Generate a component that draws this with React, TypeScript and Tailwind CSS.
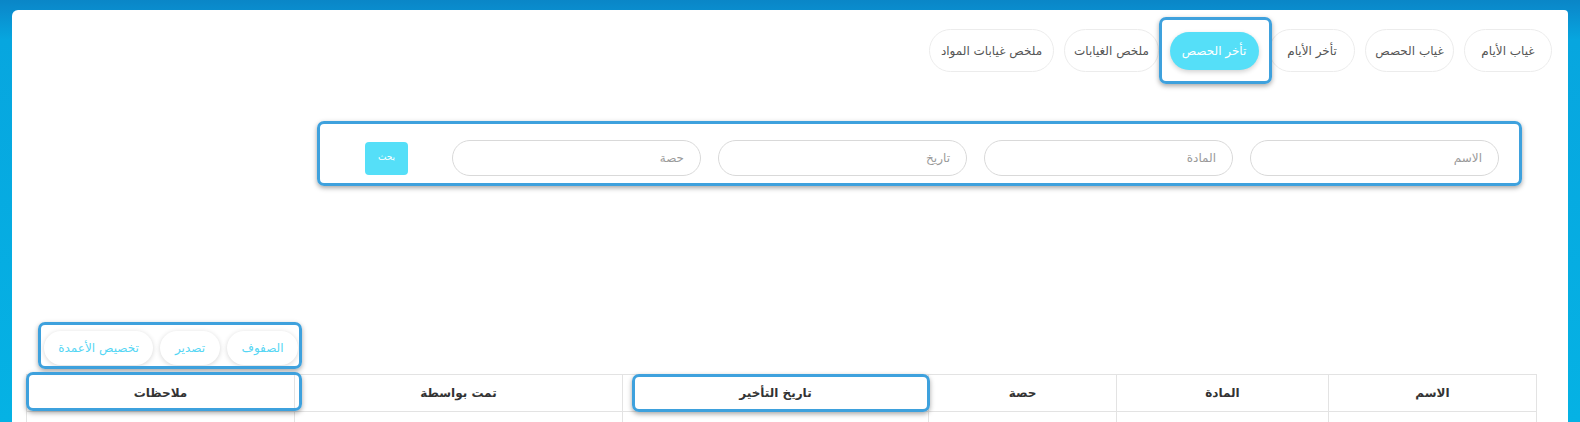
import React from "react";

const tabs = [
  { label: "غياب الأيام", w: "w-[88px]" },
  { label: "غياب الحصص", w: "w-[89px]" },
  { label: "تأخر الأيام", w: "w-[86px]" },
  { label: "تأخر الحصص", w: "w-[90px]", active: true },
  { label: "ملخص الغيابات", w: "w-[95px]" },
  { label: "ملخص غيابات المواد", w: "w-[125px]" },
];

const fields = ["الاسم", "المادة", "تاريخ", "حصة"];

const columns = [
  { label: "الاسم", w: "w-[208px]" },
  { label: "المادة", w: "w-[212px]" },
  { label: "حصة", w: "w-[188px]" },
  { label: "تاريخ التأخير", w: "w-[306px]" },
  { label: "تمت بواسطة", w: "w-[328px]" },
  { label: "ملاحظات", w: "w-[268px]" },
];

// annotation outline drawn over the real content
const mark =
  "pointer-events-none absolute border-[3px] border-[#3ea1dd] rounded-[7px] shadow-[0_2px_5px_rgba(0,0,0,0.35)]";

export default function App() {
  return (
    <div
      className="w-[1580px] h-[422px] overflow-hidden flex flex-col bg-[linear-gradient(180deg,#0a86c7_0px,#0a8ccd_9px,#07a6df_40px,#05b2e4_100%)]"
      style={{ fontFamily: '"DejaVu Sans", "Liberation Sans", sans-serif' }}
    >
      <div className="flex-1 pt-[10px] pl-[12px] pr-[12px] flex">
        <div className="flex-1 bg-white rounded-tl-[6px] rounded-tr-[4px] flex flex-col overflow-hidden">
          {/* tabs */}
          <div dir="rtl" className="flex gap-[10px] mt-[19px] mr-[16px]">
            {tabs.map((t) =>
              t.active ? (
                <div key={t.label} className={`relative h-[43px] ${t.w} flex items-center justify-center`}>
                  <div className="w-[89px] h-[38px] shrink-0 rounded-full bg-[#55dff8] text-white text-[12px] flex items-center justify-center shadow-[0_2px_5px_rgba(0,0,0,0.18)]">
                    {t.label}
                  </div>
                  <div className={`${mark} -left-[10px] -right-[13px] -inset-y-[12px]`} />
                </div>
              ) : (
                <div
                  key={t.label}
                  className={`h-[43px] ${t.w} rounded-full border border-[#ececec] bg-white text-[#555] text-[12px] flex items-center justify-center`}
                >
                  {t.label}
                </div>
              )
            )}
          </div>

          {/* search form */}
          <div className="relative w-[1205px] h-[65px] ml-auto mr-[46px] mt-[49px]">
            <div dir="rtl" className="flex items-center gap-[17px] pr-[23px] pt-[19px]">
              {fields.map((f) => (
                <div
                  key={f}
                  className="w-[249px] h-[36px] rounded-full border border-[#d9d9d9] px-[16px] flex items-center text-[12px] text-[#9a9a9a]"
                >
                  {f}
                </div>
              ))}
              <button className="mr-[27px] w-[43px] h-[33px] rounded-[4px] bg-[#55dff8] text-white text-[9px] flex items-center justify-center">
                بحث
              </button>
            </div>
            <div className={`${mark} inset-0`} />
          </div>

          {/* table tools */}
          <div className="relative self-start ml-[32px] mt-[145px]">
            <div dir="rtl" className="flex gap-[7px]">
              {["الصفوف", "تصدير", "تخصيص الأعمدة"].map((b, i) => (
                <div
                  key={b}
                  className={`h-[34px] ${i === 0 ? "w-[71px]" : i === 1 ? "w-[60px]" : "w-[109px]"} rounded-full bg-white text-[#55d6f4] text-[12px] flex items-center justify-center shadow-[0_1px_5px_rgba(0,0,0,0.16)]`}
                >
                  {b}
                </div>
              ))}
            </div>
            <div className={`${mark} -left-[6px] -right-[4px] -top-[9px] -bottom-[4px]`} />
          </div>

          {/* table */}
          <div className="relative ml-[14px] mt-[9px] w-[1510px]">
            <table dir="rtl" className="table-fixed w-[1510px] border-collapse">
              <thead>
                <tr>
                  {columns.map((c) => (
                    <th
                      key={c.label}
                      className={`${c.w} h-[37px] border border-[#e3e3e3] text-[12px] font-bold text-[#333] text-center`}
                    >
                      {c.label}
                    </th>
                  ))}
                </tr>
              </thead>
              <tbody>
                <tr>
                  {columns.map((c) => (
                    <td key={c.label} className="h-[37px] border border-[#e3e3e3]" />
                  ))}
                </tr>
              </tbody>
            </table>
            <div className={`${mark} left-0 w-[276px] -top-[2px] h-[39px]`} />
            <div className={`${mark} left-[606px] w-[298px] top-0 h-[38px]`} />
          </div>
        </div>
      </div>
      <div className="h-[5px] bg-[#3d9fdf]" />
    </div>
  );
}
